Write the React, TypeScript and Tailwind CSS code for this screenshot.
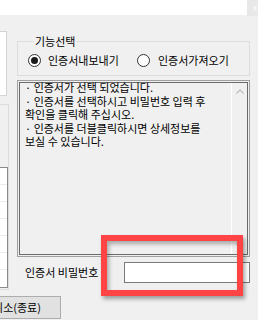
import React from "react";

const LINES = [
    "· 인증서가 선택 되었습니다.",
    "· 인증서를 선택하시고 비밀번호 입력 후",
    "확인을 클릭해 주십시오.",
    "· 인증서를 더블클릭하시면 상세정보를",
    "보실 수 있습니다.",
];

function Radio({ checked }: { checked?: boolean }) {
    return (
        <span className="flex h-[13px] w-[13px] shrink-0 items-center justify-center rounded-full border border-[#333333] bg-white">
            {checked && <span className="h-[7px] w-[7px] rounded-full bg-[#1a1a1a]" />}
        </span>
    );
}

export default function App() {
    return (
        <div className="relative h-[320px] w-[258px] overflow-hidden bg-[#f0f0f0] font-['Noto_Sans_CJK_KR',sans-serif] text-[11px] text-black">
            {/* title bar */}
            <div className="flex h-[15px] justify-end bg-white">
                <div className="flex h-[16px] w-[11px] items-center justify-end bg-[#e8e8e8] pr-[1px] text-[8px] leading-none text-white">
                    x
                </div>
            </div>

            <div className="flex">
                {/* left edge of the neighbouring panel */}
                <div className="flex w-[9px] shrink-0 flex-col">
                    <div className="mt-[16px] h-[65px] w-[7px] border-y border-r border-[#d4d4d4] bg-white" />
                    <div className="mt-[8px] flex h-[186px] w-[9px] flex-col border-y border-r border-[#dcdcdc]">
                        <div className="mt-[62px] flex h-[121px] w-[8px] flex-col border-y border-r border-[#8a8a8a] bg-white">
                            {[0, 1, 2, 3, 4, 5].map((i) => (
                                <div key={i} className="mt-[16px] h-px bg-[#ececec]" />
                            ))}
                        </div>
                    </div>
                </div>

                {/* right side */}
                <div className="ml-[8px] flex w-[233px] flex-col">
                    <fieldset className="mt-[20px] h-[41px] border border-[#dcdcdc] pl-[10px]">
                        <legend className="ml-[6px] px-[1px] leading-[13px]">기능선택</legend>
                        <div className="mt-[6px] flex items-center leading-[13px]">
                            <label className="flex w-[109px] items-center gap-[7px]">
                                <Radio checked />
                                <span>인증서내보내기</span>
                            </label>
                            <label className="flex items-center gap-[8px]">
                                <Radio />
                                <span>인증서가져오기</span>
                            </label>
                        </div>
                    </fieldset>

                    <div className="mt-[4px] h-[177px] border border-[#a0a0a0] p-[1px]">
                        <div className="flex h-full border border-[#6b6b6b]">
                            <div className="-mt-[2px] flex-1 pl-[5px] leading-[13.5px]">
                                {LINES.map((l) => (
                                    <div key={l} className="whitespace-pre">{l}</div>
                                ))}
                            </div>
                            <div className="flex w-[16px] flex-col items-center justify-between border-l border-white py-[6px]">
                                <svg width="8" height="5" viewBox="0 0 8 5">
                                    <polyline points="0.5,4.5 4,1 7.5,4.5" fill="none" stroke="#c2c2c2" strokeWidth="1.4" />
                                </svg>
                                <svg width="8" height="5" viewBox="0 0 8 5">
                                    <polyline points="0.5,0.5 4,4 7.5,0.5" fill="none" stroke="#c2c2c2" strokeWidth="1.4" />
                                </svg>
                            </div>
                        </div>
                    </div>

                    <div className="mt-[5px] flex items-center">
                        <span className="pl-[8px]">인증서 비밀번호</span>
                        <input className="ml-auto h-[21px] w-[126px] border border-[#7a7a7a] bg-white outline-none" readOnly />
                    </div>
                </div>
            </div>

            <button className="-ml-[27px] mt-[6px] flex h-[23px] w-[88px] items-center justify-center border border-[#adadad] bg-[#e1e1e1] leading-none">
                취소(종료)
            </button>

            {/* red highlight annotation */}
            <div className="absolute left-[101px] top-[235px] h-[61px] w-[142px] border-[6px] border-[#fe4444] shadow-[2px_3px_4px_rgba(0,0,0,0.35),inset_2px_3px_4px_rgba(0,0,0,0.3)]" />
        </div>
    );
}
